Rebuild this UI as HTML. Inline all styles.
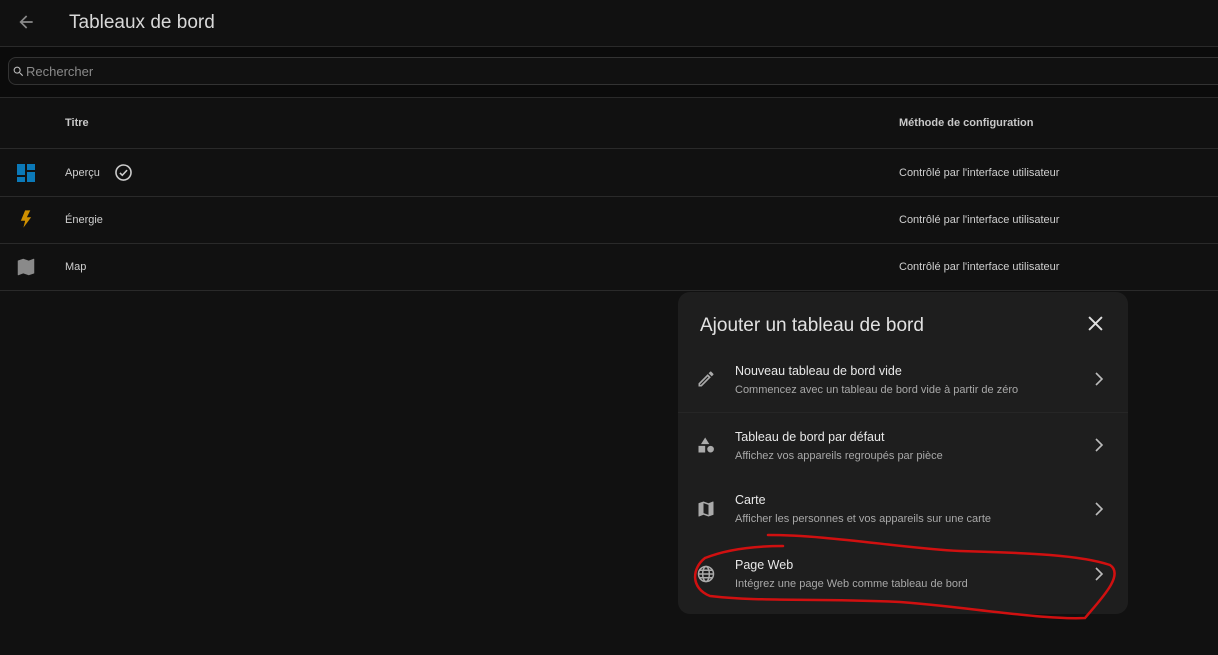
<!DOCTYPE html>
<html><head><meta charset="utf-8"><style>
*{margin:0;padding:0;box-sizing:border-box}
body{width:1218px;height:655px;background:#111;font-family:"Liberation Sans",Roboto,sans-serif;color:#d0d0d0;position:relative;overflow:hidden}
.hdr{position:absolute;left:0;top:0;width:1218px;height:47px;border-bottom:1px solid #2a2a2a}
.hdr .t{position:absolute;left:69px;top:12px;font-size:19px;color:#d8d8d8}
.sb{position:absolute;left:0;top:47px;width:1218px;height:51px;background:#0b0b0b;border-bottom:1px solid #2a2a2a}
.search{position:absolute;left:8px;top:10px;width:1230px;height:28px;border:1px solid #333;border-radius:8px;background:#111}
.search span{position:absolute;left:17px;top:6px;font-size:13px;color:#8a8a8a}
.row{position:absolute;left:0;width:1218px;border-bottom:1px solid #2a2a2a;font-size:11px;color:#cfcfcf}
.row .a{position:absolute;left:65px}
.row .b{position:absolute;left:899px}
.dlg{position:absolute;left:678px;top:292px;width:450px;height:322px;background:#1e1e1e;border-radius:12px}
.dlg h2{position:absolute;left:22px;top:23px;font-size:19px;font-weight:normal;color:#e1e1e1}
.it{position:absolute;left:0;width:450px;height:65px}
.it .t1{position:absolute;left:57px;top:17px;font-size:12.5px;color:#e8e8e8}
.it .t2{position:absolute;left:57px;top:37px;font-size:11px;color:#a8a8a8}
.it svg.ic{position:absolute;left:18px;top:22px}
.it .ch{position:absolute;right:24px;top:25px}
</style></head><body>
<div class="hdr">
<svg style="position:absolute;left:16px;top:12px" width="20" height="20" viewBox="0 0 24 24"><path fill="#8a8a8a" d="M20 11v2H8l5.5 5.5-1.420 1.420L4.16 12l7.92-7.92L13.5 5.5 8 11h12z"/></svg>
<div class="t">Tableaux de bord</div></div>
<div class="sb"><div class="search">
<svg style="position:absolute;left:3px;top:7px" width="13" height="13" viewBox="0 0 24 24"><path fill="#bbb" d="M9.5 3A6.5 6.5 0 0 1 16 9.5c0 1.61-.59 3.090-1.56 4.23l.27.27h.79l5 5-1.5 1.5-5-5v-.79l-.27-.27A6.52 6.52 0 0 1 9.5 16 6.5 6.5 0 0 1 3 9.5 6.5 6.5 0 0 1 9.5 3m0 2C7 5 5 7 5 9.5S7 14 9.5 14 14 12 14 9.5 12 5 9.5 5z"/></svg>
<span>Rechercher</span></div></div>
<div class="row" style="top:98px;height:51px;font-weight:bold;color:#c8c8c8"><span class="a" style="top:19px">Titre</span><span class="b" style="top:19px">Méthode de configuration</span></div>
<div class="row" style="top:149px;height:48px"><svg style="position:absolute;left:17px;top:15px" width="18" height="18" viewBox="0 0 18 18"><path fill="#0b79b8" d="M0 0h8v11H0zM10 0h8v6h-8zM10 8h8v10h-8zM0 13h8v5H0z"/></svg><span class="a" style="top:18px">Aperçu</span>
<svg style="position:absolute;left:114px;top:14px" width="19" height="19" viewBox="0 0 24 24"><circle cx="12" cy="12" r="9.5" fill="none" stroke="#ccc" stroke-width="2"/><path d="M7.5 12.5l3 3 6-6.5" fill="none" stroke="#ccc" stroke-width="2"/></svg>
<span class="b" style="top:18px">Contrôlé par l'interface utilisateur</span></div>
<div class="row" style="top:197px;height:47px"><svg style="position:absolute;left:20px;top:12px" width="12" height="20" viewBox="0 0 14 20"><path fill="#d09000" d="M6 0h6L8 8h5L4 20l2-8H1z"/></svg><span class="a" style="top:17px">Énergie</span><span class="b" style="top:17px">Contrôlé par l'interface utilisateur</span></div>
<div class="row" style="top:244px;height:47px"><svg style="position:absolute;left:15px;top:12px" width="22" height="22" viewBox="0 0 24 24"><path fill="#8a8a8a" d="M20.5 3l-.16.03L15 5.1 9 3 3.36 4.9c-.21.07-.36.25-.36.48V20.5a.5.5 0 0 0 .5.5l.16-.03L9 18.9l6 2.1 5.64-1.9c.21-.07.36-.25.36-.48V3.5a.5.5 0 0 0-.5-.5z"/></svg><span class="a" style="top:17px">Map</span><span class="b" style="top:17px">Contrôlé par l'interface utilisateur</span></div>

<div class="dlg"><h2>Ajouter un tableau de bord</h2>
<svg style="position:absolute;left:410px;top:24px" width="15" height="15" viewBox="0 0 14 14"><path d="M1 1l12 12M13 1L1 13" stroke="#e0e0e0" stroke-width="1.8"/></svg>
<div class="it" style="top:55px"><svg class="ic" width="20" height="20" viewBox="0 0 24 24"><path fill="#aaa" d="M14.06 9l.94.94L5.92 19H5v-.92L14.06 9m3.6-6c-.25 0-.51.1-.7.29l-1.830 1.830 3.75 3.75 1.83-1.83c.39-.39.39-1.04 0-1.41l-2.34-2.34c-.2-.2-.45-.29-.71-.29m-3.6 3.19L3 17.25V21h3.75L17.81 9.94l-3.75-3.75z"/></svg><div class="t1">Nouveau tableau de bord vide</div><div class="t2">Commencez avec un tableau de bord vide à partir de zéro</div><svg class="ch" width="10" height="14" viewBox="0 0 10 14"><path d="M2 1l6 6-6 6" fill="none" stroke="#bbb" stroke-width="1.6"/></svg></div>
<div class="it" style="top:120px;border-top:1px solid #262626"><svg class="ic" width="20" height="20" viewBox="0 0 24 24"><path fill="#aaa" d="M11 3l5 8H6zM3 13h8v8H3zM17.5 13a4 4 0 1 1 0 8 4 4 0 0 1 0-8z"/></svg><div class="t1">Tableau de bord par défaut</div><div class="t2">Affichez vos appareils regroupés par pièce</div><svg class="ch" width="10" height="14" viewBox="0 0 10 14"><path d="M2 1l6 6-6 6" fill="none" stroke="#bbb" stroke-width="1.6"/></svg></div>
<div class="it" style="top:185px"><svg class="ic" width="20" height="20" viewBox="0 0 24 24"><path fill="#aaa" d="M20.5 3l-.16.03L15 5.1 9 3 3.36 4.9c-.21.07-.36.25-.36.48V20.5a.5.5 0 0 0 .5.5l.16-.03L9 18.9l6 2.1 5.64-1.9c.21-.07.36-.25.36-.48V3.5a.5.5 0 0 0-.5-.5zM15 19l-6-2.11V5l6 2.11z"/></svg><div class="t1" style="top:16px">Carte</div><div class="t2" style="top:36px">Afficher les personnes et vos appareils sur une carte</div><svg class="ch" width="10" height="14" viewBox="0 0 10 14"><path d="M2 1l6 6-6 6" fill="none" stroke="#bbb" stroke-width="1.6"/></svg></div>
<div class="it" style="top:250px"><svg class="ic" width="20" height="20" viewBox="0 0 24 24"><g fill="none" stroke="#aaa" stroke-width="1.8"><circle cx="12" cy="12" r="9"/><ellipse cx="12" cy="12" rx="4" ry="9"/><path d="M3 12h18M4.5 7.5h15M4.5 16.5h15"/></g></svg><div class="t1" style="top:16px">Page Web</div><div class="t2" style="top:36px">Intégrez une page Web comme tableau de bord</div><svg class="ch" width="10" height="14" viewBox="0 0 10 14"><path d="M2 1l6 6-6 6" fill="none" stroke="#bbb" stroke-width="1.6"/></svg></div>
</div>
<svg style="position:absolute;left:0;top:0" width="1218" height="655"><g fill="none" stroke="#d01010" stroke-width="2.5" stroke-linecap="round"><path d="M768 535C830 535 900 548 960 551C1030 553 1080 555 1110 565C1125 575 1100 600 1085 618C1040 620 960 606 900 602C820 598 760 602 710 596C690 588 692 568 705 558C730 548 760 546 783 546"/></g></svg>
</body></html>
